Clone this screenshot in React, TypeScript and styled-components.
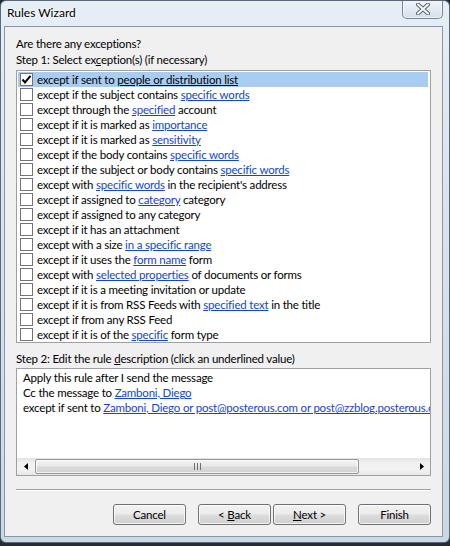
import React from "react";
import styled, { createGlobalStyle } from "styled-components";

const Global = createGlobalStyle`
  html, body { margin: 0; padding: 0; background: #222b36; }
  body {
    width: 450px; height: 546px; overflow: hidden;
    font-family: Lato, "Noto Sans", "Liberation Sans", sans-serif;
    font-size: 11.5px; letter-spacing: -0.2px; color: #000;
  }
  * { box-sizing: border-box; }
`;

const Window = styled.div`
  width: 450px;
  height: 543px;
  border: 1px solid #5b6877;
  border-radius: 6px;
  background: linear-gradient(180deg, #e6eef6 0%, #d8e3ee 40%, #cad8e6 100%);
  display: flex;
  flex-direction: column;
  padding: 0 6px 5px 3px;
  overflow: hidden;
`;

const TitleBar = styled.div`
  height: 26px;
  display: flex;
  justify-content: space-between;
  align-items: flex-start;
  margin-top: -1px;
`;

const Title = styled.div`
  padding: 5px 0 0 3px;
  line-height: 15px;
  font-size: 12px;
  letter-spacing: 0;
  color: #000;
  text-shadow: 0 0 6px #fff, 0 0 3px #fff;
`;

const CloseButton = styled.div`
  width: 41px;
  height: 19px;
  border: 1px solid #76869a;
  border-top: none;
  border-radius: 0 0 5px 5px;
  background: linear-gradient(180deg, #f1f5f9 0%, #e3eaf2 50%, #d5dfea 100%);
  box-shadow: inset 0 0 0 1px rgba(255, 255, 255, 0.6);
  display: flex;
  align-items: center;
  justify-content: center;
`;

const Client = styled.div`
  flex: 1;
  background: #f0f0f0;
  border: 1px solid #8896a6;
  display: flex;
  flex-direction: column;
  padding: 9px 11px 10px 11px;
`;

const Label = styled.div<{ $gap?: number }>`
  line-height: 15px;
  height: 15px;
  margin-top: ${(p) => p.$gap ?? 0}px;
  white-space: nowrap;
`;

const ListBox = styled.div`
  margin-top: 3px;
  height: 273px;
  background: #fff;
  border: 1px solid #a0a0a0;
  padding: 1px 1px 0 1px;
  display: flex;
  flex-direction: column;
`;

const Row = styled.div<{ $selected?: boolean }>`
  height: 15px;
  display: flex;
  align-items: center;
  gap: 4px;
  padding-left: 2px;
  margin-right: 1px;
  background: ${(p) => (p.$selected ? "#a9cdf1" : "transparent")};
  white-space: nowrap;
  line-height: 15px;
`;

const Box = styled.div`
  width: 13px;
  height: 13px;
  border: 1px solid #747474;
  background: #fff;
  flex: none;
  display: flex;
  align-items: center;
  justify-content: center;
`;

const Link = styled.span<{ $plain?: boolean }>`
  color: ${(p) => (p.$plain ? "#000" : "#1545cc")};
  text-decoration: underline;
  text-underline-offset: 1px;
`;

const DescBox = styled.div`
  margin-top: 2px;
  height: 108px;
  background: #fff;
  border: 1px solid #a0a0a0;
  display: flex;
  flex-direction: column;
`;

const DescText = styled.div`
  flex: 1;
  padding: 1px 0 0 6px;
  overflow: hidden;
`;

const DescLine = styled.div`
  line-height: 15px;
  height: 15px;
  white-space: nowrap;
`;

const HScroll = styled.div`
  height: 17px;
  display: flex;
  align-items: stretch;
  background: linear-gradient(180deg, #e3e3e3 0%, #f2f2f2 30%, #f2f2f2 70%, #e6e6e6 100%);
`;

const Arrow = styled.div`
  width: 17px;
  flex: none;
  display: flex;
  align-items: center;
  justify-content: center;
`;

const Track = styled.div`
  flex: 1;
  display: flex;
  align-items: stretch;
  padding: 1px 0 1px 1px;
`;

const Thumb = styled.div<{ $w: number }>`
  width: ${(p) => p.$w}px;
  border: 1px solid #979797;
  border-radius: 2px;
  background: linear-gradient(180deg, #f4f4f4 0%, #e9e9e9 45%, #d9d9d9 55%, #d2d2d2 100%);
  box-shadow: inset 0 0 0 1px rgba(255, 255, 255, 0.7);
  display: flex;
  align-items: center;
  justify-content: center;
`;

const Separator = styled.div`
  margin-top: 13px;
  height: 2px;
  border-top: 1px solid #a0a0a0;
  border-bottom: 1px solid #ffffff;
`;

const ButtonRow = styled.div`
  margin-top: 13px;
  display: flex;
  justify-content: flex-end;
`;

const Button = styled.div<{ $gap?: number }>`
  width: 73px;
  height: 21px;
  margin-left: ${(p) => p.$gap ?? 0}px;
  border: 1px solid #707070;
  border-radius: 3px;
  background: linear-gradient(180deg, #f2f2f2 0%, #ebebeb 48%, #dddddd 52%, #cfcfcf 100%);
  box-shadow: inset 0 0 0 1px rgba(255, 255, 255, 0.75);
  display: flex;
  align-items: center;
  justify-content: center;
  line-height: 15px;
  white-space: pre;
`;

type Seg = string | { l: string };
const rows: Seg[][] = [
  ["except if sent to ", { l: "people or distribution list" }],
  ["except if the subject contains ", { l: "specific words" }],
  ["except through the ", { l: "specified" }, " account"],
  ["except if it is marked as ", { l: "importance" }],
  ["except if it is marked as ", { l: "sensitivity" }],
  ["except if the body contains ", { l: "specific words" }],
  ["except if the subject or body contains ", { l: "specific words" }],
  ["except with ", { l: "specific words" }, " in the recipient's address"],
  ["except if assigned to ", { l: "category" }, " category"],
  ["except if assigned to any category"],
  ["except if it has an attachment"],
  ["except with a size ", { l: "in a specific range" }],
  ["except if it uses the ", { l: "form name" }, " form"],
  ["except with ", { l: "selected properties" }, " of documents or forms"],
  ["except if it is a meeting invitation or update"],
  ["except if it is from RSS Feeds with ", { l: "specified text" }, " in the title"],
  ["except if from any RSS Feed"],
  ["except if it is of the ", { l: "specific" }, " form type"],
];

const Check = () => (
  <svg width="11" height="11" viewBox="0 0 11 11">
    <path d="M1.5 5.5 L4 8.5 L9.5 1.8" fill="none" stroke="#000" strokeWidth="2" />
  </svg>
);

const CloseX = () => (
  <svg width="16" height="12" viewBox="0 0 16 12">
    <path d="M3 1.5 L13 10.5 M13 1.5 L3 10.5" stroke="#5c6670" strokeWidth="4" strokeLinecap="round" />
    <path d="M3 1.5 L13 10.5 M13 1.5 L3 10.5" stroke="#f4f6f8" strokeWidth="2" strokeLinecap="round" />
  </svg>
);

const TriLeft = () => (
  <svg width="4" height="7" viewBox="0 0 4 7">
    <path d="M4 0 L0 3.5 L4 7 Z" fill="#000" />
  </svg>
);
const TriRight = () => (
  <svg width="4" height="7" viewBox="0 0 4 7">
    <path d="M0 0 L4 3.5 L0 7 Z" fill="#000" />
  </svg>
);
const Grip = () => (
  <svg width="7" height="7" viewBox="0 0 7 7">
    <path d="M0.5 0 V7 M3.5 0 V7 M6.5 0 V7" stroke="#6f6f6f" strokeWidth="1" />
  </svg>
);

export default function App() {
  return (
    <>
      <Global />
      <Window>
        <TitleBar>
          <Title>Rules Wizard</Title>
          <CloseButton>
            <CloseX />
          </CloseButton>
        </TitleBar>
        <Client>
          <Label>Are there any exceptions?</Label>
          <Label $gap={1}>
            Step 1: Select ex<u>c</u>eption(s) (if necessary)
          </Label>
          <ListBox>
            {rows.map((segs, i) => (
              <Row key={i} $selected={i === 0}>
                <Box>{i === 0 && <Check />}</Box>
                <span>
                  {segs.map((s, j) =>
                    typeof s === "string" ? (
                      <span key={j}>{s}</span>
                    ) : (
                      <Link key={j} $plain={i === 0}>
                        {s.l}
                      </Link>
                    )
                  )}
                </span>
              </Row>
            ))}
          </ListBox>
          <Label $gap={8}>
            Step 2: Edit the rule <u>d</u>escription (click an underlined value)
          </Label>
          <DescBox>
            <DescText>
              <DescLine>Apply this rule after I send the message</DescLine>
              <DescLine>
                Cc the message to <Link>Zamboni, Diego</Link>
              </DescLine>
              <DescLine>
                except if sent to{" "}
                <Link>Zamboni, Diego or post@posterous.com or post@zzblog.posterous.com</Link>
              </DescLine>
            </DescText>
            <HScroll>
              <Arrow>
                <TriLeft />
              </Arrow>
              <Track>
                <Thumb $w={324}>
                  <Grip />
                </Thumb>
              </Track>
              <Arrow>
                <TriRight />
              </Arrow>
            </HScroll>
          </DescBox>
          <Separator />
          <ButtonRow>
            <Button>Cancel</Button>
            <Button $gap={12}>
              {"< "}
              <u>B</u>ack
            </Button>
            <Button $gap={2}>
              <u>N</u>ext{" >"}
            </Button>
            <Button $gap={12}>Finish</Button>
          </ButtonRow>
        </Client>
      </Window>
    </>
  );
}
